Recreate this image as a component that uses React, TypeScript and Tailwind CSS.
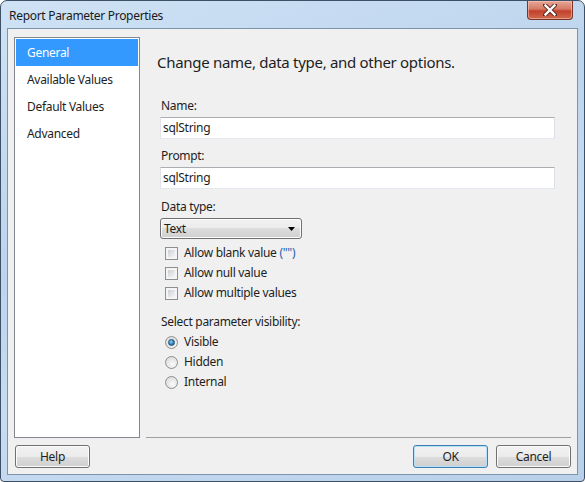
import React from 'react'

const font = { fontFamily: '"Noto Sans", "Open Sans", sans-serif' }

function CloseButton() {
  return (
    <div className="w-[46px] h-[19px] mr-[5px] rounded-b-[4px] border border-t-0 border-[#7a3428] bg-[linear-gradient(#e8a696,#d47a66_45%,#c2402a_55%,#cf6a4e)] flex items-center justify-center shadow-[inset_0_0_0_1px_rgba(255,210,200,0.5)]">
      <svg width="14" height="12" viewBox="0 0 14 12">
        <path d="M2 1 L12 11 M12 1 L2 11" stroke="#5a2a22" strokeWidth="4.2" strokeLinecap="square" />
        <path d="M2.5 1.5 L11.5 10.5 M11.5 1.5 L2.5 10.5" stroke="#ffffff" strokeWidth="2.4" strokeLinecap="square" />
      </svg>
    </div>
  )
}

function NavItem({ label, selected }: { label: string; selected?: boolean }) {
  return (
    <div
      className={`h-[27px] flex items-center pl-[11px] text-[12px] ${
        selected ? 'bg-[#3399ff] text-white' : 'text-[#1e1e1e]'
      }`}
    >
      {label}
    </div>
  )
}

function TextBox({ value }: { value: string }) {
  return (
    <div className="h-[22px] bg-white border border-t-[#abadb3] border-l-[#e2e3ea] border-r-[#dbdfe6] border-b-[#e3e9ef] flex items-center pl-[2px] text-[12px] text-[#1e1e1e]">
      {value}
    </div>
  )
}

function CheckBox({ label }: { label: React.ReactNode }) {
  return (
    <div className="h-[20px] flex items-center pl-[5px] text-[12px] text-[#1e1e1e]">
      <div className="w-[13px] h-[13px] border border-[#8e8f8f] bg-[#f4f4f4] p-[2px] mr-[6px]">
        <div className="w-full h-full bg-[linear-gradient(135deg,#cbcfd5,#f6f6f6)]" />
      </div>
      {label}
    </div>
  )
}

function Radio({ label, checked }: { label: string; checked?: boolean }) {
  return (
    <div className="h-[20px] flex items-center pl-[5px] text-[12px] text-[#1e1e1e]">
      <div className="w-[13px] h-[13px] rounded-full border border-[#8e8f8f] bg-[radial-gradient(circle_at_60%_65%,#fafafa,#d4d4d4)] flex items-center justify-center mr-[6px]">
        {checked && (
          <div className="w-[7px] h-[7px] rounded-full border border-[#1b4d72] bg-[radial-gradient(circle_at_40%_35%,#9fd3f4,#2a84c2_55%,#1a5f92)]" />
        )}
      </div>
      {label}
    </div>
  )
}

function Button({ label, primary, className }: { label: string; primary?: boolean; className?: string }) {
  return (
    <div
      className={`w-[75px] h-[23px] rounded-[3px] border ${
        primary ? 'border-[#3c7fb1] shadow-[inset_0_0_0_1px_#b4e0fa]' : 'border-[#707070] shadow-[inset_0_0_0_1px_#fcfcfc]'
      } bg-[linear-gradient(#f2f2f2,#ebebeb_50%,#dddddd_50%,#cfcfcf)] flex items-center justify-center text-[12px] text-[#1e1e1e] ${className ?? ''}`}
    >
      {label}
    </div>
  )
}

export default function App() {
  return (
    <div
      style={font}
      className="w-[585px] h-[482px] tracking-[-0.3px] rounded-t-[7px] rounded-b-[4px] border border-[#3d5166] bg-[linear-gradient(160deg,#cfe2f5,#bcd4ed_40%,#c7dcf2_60%,#b8d0ea)] px-[6px] pb-[6px] flex flex-col"
    >
      <div className="h-[27px] flex items-start">
        <div className="pl-[2px] pt-[6px] text-[12px] text-[#1a1a1a]">Report Parameter Properties</div>
        <div className="ml-auto">
          <CloseButton />
        </div>
      </div>

      <div className="flex-1 border border-[#7f93ab] bg-[#f0f0f0] flex flex-col px-[6px] pt-[8px]">
        <div className="h-[401px] flex">
          <div className="w-[126px] border border-[#828790] bg-white p-[1px]">
            <NavItem label="General" selected />
            <NavItem label="Available Values" />
            <NavItem label="Default Values" />
            <NavItem label="Advanced" />
          </div>

          <div className="flex-1 ml-[6px] border-b border-[#a0a0a0]">
            <div className="pl-[11px] pt-[15px] text-[15px] text-[#1e1e1e] leading-[20px]">
              Change name, data type, and other options.
            </div>

            <div className="pl-[14px] pr-[16px] pt-[26px] flex flex-col">
              <div className="text-[12px] leading-[16px] text-[#1e1e1e] pl-[1px] mb-[3px]">Name:</div>
              <TextBox value="sqlString" />

              <div className="text-[12px] leading-[16px] text-[#1e1e1e] pl-[1px] mt-[9px] mb-[3px]">Prompt:</div>
              <TextBox value="sqlString" />

              <div className="text-[12px] leading-[16px] text-[#1e1e1e] pl-[1px] mt-[10px] mb-[3px]">Data type:</div>
              <div className="w-[142px] h-[21px] rounded-[3px] border border-[#707070] bg-[linear-gradient(#f2f2f2,#ebebeb_50%,#dddddd_50%,#cfcfcf)] shadow-[inset_0_0_0_1px_#fcfcfc] flex items-center pl-[3px] pr-[6px] text-[12px] text-[#1e1e1e]">
                <span>Text</span>
                <svg className="ml-auto" width="7" height="4" viewBox="0 0 7 4">
                  <path d="M0 0 H7 L3.5 4 Z" fill="#000" />
                </svg>
              </div>

              <div className="mt-[4px] flex flex-col">
                <CheckBox
                  label={
                    <span>
                      Allow blank value <span className="text-[#1f5fb0]">("")</span>
                    </span>
                  }
                />
                <CheckBox label="Allow null value" />
                <CheckBox label="Allow multiple values" />
              </div>

              <div className="text-[12px] leading-[16px] text-[#1e1e1e] pl-[1px] mt-[11px] mb-[2px]">
                Select parameter visibility:
              </div>
              <div className="flex flex-col">
                <Radio label="Visible" checked />
                <Radio label="Hidden" />
                <Radio label="Internal" />
              </div>
            </div>
          </div>
        </div>

        <div className="flex items-center mt-[7px]">
          <Button label="Help" className="ml-[1px]" />
          <Button label="OK" primary className="ml-auto" />
          <Button label="Cancel" className="ml-[8px]" />
        </div>
      </div>
    </div>
  )
}
